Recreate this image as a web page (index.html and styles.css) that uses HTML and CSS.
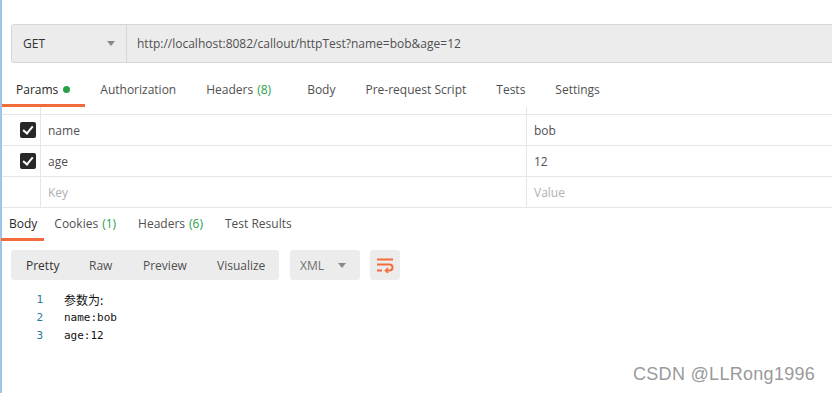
FILE: index.html
```html
<!DOCTYPE html>
<html lang="en">
<head>
    <meta charset="UTF-8">
    <title>httpTest</title>
    <link rel="stylesheet" href="styles.css">
</head>
<body>
<div class="app">
    <!-- 顶部留白 -->
    <div class="title-strip"></div>

    <!-- 请求地址栏 -->
    <div class="url-bar">
        <div class="method">
            <span>GET</span>
            <span class="caret"></span>
        </div>
        <div class="url">http://localhost:8082/callout/httpTest?name=bob&amp;age=12</div>
    </div>

    <!-- 请求标签 -->
    <div class="req-tabs">
        <div class="tab active">Params <span class="dot"></span></div>
        <div class="tab">Authorization</div>
        <div class="tab">Headers <span class="count">(8)</span></div>
        <div class="tab">Body</div>
        <div class="tab">Pre-request Script</div>
        <div class="tab">Tests</div>
        <div class="tab">Settings</div>
    </div>

    <!-- 参数表格 -->
    <div class="params">
        <div class="row head">
            <div class="cell check"></div>
            <div class="cell key"></div>
            <div class="cell value"></div>
        </div>
        <div class="row">
            <div class="cell check"><span class="box"></span></div>
            <div class="cell key">name</div>
            <div class="cell value">bob</div>
        </div>
        <div class="row">
            <div class="cell check"><span class="box"></span></div>
            <div class="cell key">age</div>
            <div class="cell value">12</div>
        </div>
        <div class="row">
            <div class="cell check"></div>
            <div class="cell key placeholder">Key</div>
            <div class="cell value placeholder">Value</div>
        </div>
    </div>

    <!-- 响应标签 -->
    <div class="res-tabs">
        <div class="tab active">Body</div>
        <div class="tab">Cookies <span class="count">(1)</span></div>
        <div class="tab">Headers <span class="count">(6)</span></div>
        <div class="tab">Test Results</div>
    </div>

    <!-- 响应工具栏 -->
    <div class="toolbar">
        <div class="view-group">
            <span class="view">Pretty</span>
            <span class="view">Raw</span>
            <span class="view">Preview</span>
            <span class="view">Visualize</span>
        </div>
        <div class="lang-select">
            <span>XML</span>
            <span class="caret"></span>
        </div>
        <div class="wrap-btn">
            <svg width="18" height="16" viewBox="0 0 18 16">
                <path d="M1 2.5h16M1 7.5h12.5a3 3 0 0 1 0 6H10M1 13.5h5" fill="none" stroke="#f26b3a" stroke-width="2"/>
                <path d="M12 11l-2.5 2.5 2.5 2.5" fill="none" stroke="#f26b3a" stroke-width="1.6"/>
            </svg>
        </div>
    </div>

    <!-- 响应内容 -->
    <div class="code">
        <div class="line"><span class="num">1</span><span class="txt">参数为:</span></div>
        <div class="line"><span class="num">2</span><span class="txt">name:bob</span></div>
        <div class="line"><span class="num">3</span><span class="txt">age:12</span></div>
    </div>

    <div class="watermark">CSDN @LLRong1996</div>
</div>
</body>
</html>
```
FILE: styles.css
```css
/* 页面基础 */
html, body {
    margin: 0;
    padding: 0;
    background: #fff;
    overflow: hidden;
}

.app {
    height: 393px;
    border-left: 2px solid #9ec4ec;
    font-family: "Open Sans", "Noto Sans", sans-serif;
    font-size: 12px;
    color: #505050;
    display: flex;
    flex-direction: column;
}

/* 顶部留白 */
.title-strip {
    height: 24px;
    flex-shrink: 0;
}

/* 地址栏 */
.url-bar {
    display: flex;
    height: 37px;
    flex-shrink: 0;
    margin: 0 -10px 0 9px;
    background-color: #ececec;
    border: 1px solid #d6d6d6;
    border-radius: 3px;
}

.method {
    width: 92px;
    padding: 0 11px 0 11px;
    display: flex;
    align-items: center;
    justify-content: space-between;
    border-right: 1px solid #d6d6d6;
    color: #333;
    font-size: 12px;
}

.caret {
    width: 0;
    height: 0;
    border-left: 4px solid transparent;
    border-right: 4px solid transparent;
    border-top: 5px solid #888;
}

.url {
    flex: 1;
    display: flex;
    align-items: center;
    padding-left: 10px;
    color: #505050;
}

/* 请求标签 */
.req-tabs {
    display: flex;
    margin-top: 12px;
    height: 32px;
    flex-shrink: 0;
}

.tab {
    display: flex;
    align-items: center;
    padding: 0 15px;
    border-bottom: 3px solid transparent;
    box-sizing: border-box;
    white-space: nowrap;
}

.req-tabs .tab:nth-child(1) { padding: 0 15px 0 14px; }
.req-tabs .tab:nth-child(3) { padding: 0 21px 0 15px; }

.tab.active {
    color: #282828;
    border-bottom-color: #f26b3a;
}

.dot {
    display: inline-block;
    width: 7px;
    height: 7px;
    border-radius: 50%;
    background: #26a14a;
    margin-left: 5px;
}

.count {
    color: #26a14a;
    margin-left: 4px;
}

/* 参数表格 */
.params {
    border-bottom: 1px solid #e6e6e6;
    flex-shrink: 0;
}

.row {
    display: flex;
    height: 30px;
    border-top: 1px solid #e6e6e6;
}

.row.head {
    height: 7px;
    border-top: none;
}

.cell {
    display: flex;
    align-items: center;
    box-sizing: border-box;
}

.cell.check {
    width: 39px;
    padding-left: 18px;
    border-right: 1px solid #e6e6e6;
}

.cell.key {
    width: 486px;
    padding-left: 7px;
    border-right: 1px solid #e6e6e6;
}

.cell.value {
    flex: 1;
    padding-left: 7px;
}

.placeholder {
    color: #b0b0b0;
}

.box {
    width: 16px;
    height: 16px;
    border-radius: 2px;
    background: #282828;
    position: relative;
}

.box::after {
    content: "";
    position: absolute;
    left: 5px;
    top: 2px;
    width: 4px;
    height: 8px;
    border-right: 2px solid #fff;
    border-bottom: 2px solid #fff;
    transform: rotate(40deg);
}

/* 响应标签 */
.res-tabs {
    display: flex;
    height: 33px;
    margin-left: -1px;
    flex-shrink: 0;
}

.res-tabs .tab:nth-child(1) { padding: 0 7px 0 8px; }
.res-tabs .tab:nth-child(2) { padding: 0 11px 0 10px; }
.res-tabs .tab:nth-child(3) { padding: 0 12px 0 11px; }
.res-tabs .tab:nth-child(4) { padding: 0 10px; }

/* 工具栏 */
.toolbar {
    display: flex;
    margin: 9px 0 0 9px;
    height: 30px;
    gap: 11px;
    flex-shrink: 0;
}

.view-group {
    display: flex;
    align-items: center;
    width: 268px;
    background: #ececec;
    border-radius: 3px;
}

.view {
    box-sizing: border-box;
}

.view:nth-child(1) { padding-left: 15px; width: 78px; color: #333; }
.view:nth-child(2) { width: 54px; }
.view:nth-child(3) { width: 74px; }

.lang-select {
    width: 70px;
    box-sizing: border-box;
    padding: 0 14px 0 10px;
    display: flex;
    align-items: center;
    justify-content: space-between;
    background: #ececec;
    border-radius: 3px;
    color: #707070;
}

.wrap-btn {
    width: 30px;
    margin-left: -1px;
    display: flex;
    align-items: center;
    justify-content: center;
    background: #ececec;
    border-radius: 3px;
}

/* 代码区 */
.code {
    margin-top: 10px;
    font-family: "DejaVu Sans Mono", "Noto Sans CJK SC", monospace;
    font-size: 11px;
}

.line {
    display: flex;
    height: 18px;
    align-items: center;
}

.num {
    width: 41px;
    text-align: right;
    color: #2a7b98;
}

.txt {
    margin-left: 21px;
    color: #111;
}

.line:first-child .txt {
    font-family: "Noto Sans CJK SC", sans-serif;
    font-size: 12px;
}

/* 水印 */
.watermark {
    margin: 20px 0 0 631px;
    font-family: "Liberation Sans", sans-serif;
    font-size: 18px;
    letter-spacing: 0.3px;
    color: #9a9a9a;
    white-space: nowrap;
}
```
